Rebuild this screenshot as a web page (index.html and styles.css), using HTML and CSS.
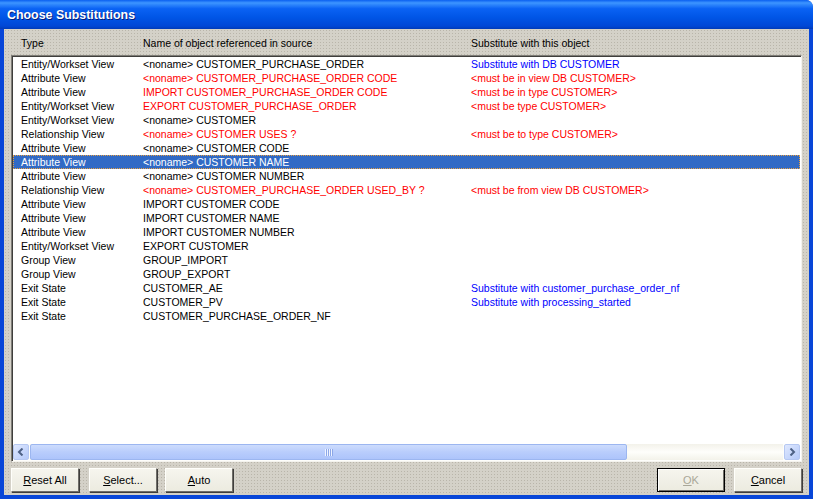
FILE: index.html
```html
<!DOCTYPE html>
<html lang="en">
<head>
    <meta charset="UTF-8">
    <title>Choose Substitutions</title>
    <link rel="stylesheet" href="styles.css">
</head>
<body>
    <div class="window">
        <div class="titlebar">Choose Substitutions</div>

        <div class="dialog">
            <div class="cols header">
                <span>Type</span>
                <span>Name of object referenced in source</span>
                <span>Substitute with this object</span>
            </div>

            <div class="listbox">
                <div class="rows">
                    <div class="cols row"><span>Entity/Workset View</span><span>&lt;noname&gt; CUSTOMER_PURCHASE_ORDER</span><span class="blue">Substitute with DB CUSTOMER</span></div>
                    <div class="cols row"><span>Attribute View</span><span class="red">&lt;noname&gt; CUSTOMER_PURCHASE_ORDER CODE</span><span class="red">&lt;must be in view DB CUSTOMER&gt;</span></div>
                    <div class="cols row"><span>Attribute View</span><span class="red">IMPORT CUSTOMER_PURCHASE_ORDER CODE</span><span class="red">&lt;must be in type CUSTOMER&gt;</span></div>
                    <div class="cols row"><span>Entity/Workset View</span><span class="red">EXPORT CUSTOMER_PURCHASE_ORDER</span><span class="red">&lt;must be type CUSTOMER&gt;</span></div>
                    <div class="cols row"><span>Entity/Workset View</span><span>&lt;noname&gt; CUSTOMER</span><span></span></div>
                    <div class="cols row"><span>Relationship View</span><span class="red">&lt;noname&gt; CUSTOMER USES ?</span><span class="red">&lt;must be to type CUSTOMER&gt;</span></div>
                    <div class="cols row"><span>Attribute View</span><span>&lt;noname&gt; CUSTOMER CODE</span><span></span></div>
                    <div class="cols row selected"><span>Attribute View</span><span>&lt;noname&gt; CUSTOMER NAME</span><span></span></div>
                    <div class="cols row"><span>Attribute View</span><span>&lt;noname&gt; CUSTOMER NUMBER</span><span></span></div>
                    <div class="cols row"><span>Relationship View</span><span class="red">&lt;noname&gt; CUSTOMER_PURCHASE_ORDER USED_BY ?</span><span class="red">&lt;must be from view DB CUSTOMER&gt;</span></div>
                    <div class="cols row"><span>Attribute View</span><span>IMPORT CUSTOMER CODE</span><span></span></div>
                    <div class="cols row"><span>Attribute View</span><span>IMPORT CUSTOMER NAME</span><span></span></div>
                    <div class="cols row"><span>Attribute View</span><span>IMPORT CUSTOMER NUMBER</span><span></span></div>
                    <div class="cols row"><span>Entity/Workset View</span><span>EXPORT CUSTOMER</span><span></span></div>
                    <div class="cols row"><span>Group View</span><span>GROUP_IMPORT</span><span></span></div>
                    <div class="cols row"><span>Group View</span><span>GROUP_EXPORT</span><span></span></div>
                    <div class="cols row"><span>Exit State</span><span>CUSTOMER_AE</span><span class="blue">Substitute with customer_purchase_order_nf</span></div>
                    <div class="cols row"><span>Exit State</span><span>CUSTOMER_PV</span><span class="blue">Substitute with processing_started</span></div>
                    <div class="cols row"><span>Exit State</span><span>CUSTOMER_PURCHASE_ORDER_NF</span><span></span></div>
                </div>

                <div class="hscroll">
                    <div class="arrow">
                        <svg width="8" height="8" viewBox="0 0 8 8"><path d="M5.5 0.5 L2 4 L5.5 7.5" fill="none" stroke="#4d6185" stroke-width="2"/></svg>
                    </div>
                    <div class="track">
                        <div class="thumb"><span class="grip"></span></div>
                    </div>
                    <div class="arrow">
                        <svg width="8" height="8" viewBox="0 0 8 8"><path d="M2.5 0.5 L6 4 L2.5 7.5" fill="none" stroke="#4d6185" stroke-width="2"/></svg>
                    </div>
                </div>
            </div>

            <div class="buttons">
                <button class="btn"><u>R</u>eset All</button>
                <button class="btn"><u>S</u>elect...</button>
                <button class="btn"><u>A</u>uto</button>
                <span class="spacer"></span>
                <button class="btn default" disabled><u>O</u>K</button>
                <button class="btn"><u>C</u>ancel</button>
            </div>
        </div>
    </div>
</body>
</html>
```

FILE: styles.css
```css
* {
    margin: 0;
    padding: 0;
    box-sizing: border-box;
}

body {
    font-family: Tahoma, 'Liberation Sans', 'DejaVu Sans', sans-serif;
    font-size: 10.5px;
    color: #000;
    background: #fff;
    overflow: hidden;
}

/* Window frame */
.window {
    width: 813px;
    height: 499px;
    display: flex;
    flex-direction: column;
    background: #0846d8;
    border-top-right-radius: 7px;
    overflow: hidden;
}

.titlebar {
    height: 29px;
    flex: none;
    padding: 8px 0 0 7px;
    font-size: 12.4px;
    font-weight: bold;
    color: #fff;
    text-shadow: 1px 1px 0 #0a1e7a;
    background: linear-gradient(#0a5ff0 0%, #3d95ff 10%, #0a62f4 30%, #0055e6 60%, #0047d6 90%, #003ab8 100%);
}

.dialog {
    flex: 1;
    display: flex;
    flex-direction: column;
    margin: 0 4px 4px 4px;
    padding: 0 7px 0 7px;
    background-color: #d4d1c8;
    background-image: radial-gradient(circle, #b9b5aa 0.6px, transparent 0.9px);
    background-size: 3px 3px;
}

.cols {
    display: grid;
    grid-template-columns: 122px 328px 1fr;
    white-space: nowrap;
}

.header {
    height: 26px;
    padding: 7px 0 0 10px;
    line-height: 14px;
}

/* List box */
.listbox {
    height: 407px;
    display: flex;
    flex-direction: column;
    background: #fff;
    border: 1px solid;
    border-color: #7f7d78 #f4f3ee #f4f3ee #7f7d78;
    box-shadow: inset 1px 1px 0 #3f3e3c;
    padding: 1px 1px 0 1px;
}

.rows {
    flex: 1;
}

.row {
    height: 14px;
    line-height: 14px;
    padding-left: 8px;
}

.row.selected {
    background: #316ac5;
    color: #fff;
    outline: 1px dotted #e8a040;
    outline-offset: -1px;
}

.red {
    color: #ff0000;
}

.blue {
    color: #0000ff;
}

/* Horizontal scrollbar */
.hscroll {
    height: 17px;
    display: flex;
    gap: 1px;
    padding-bottom: 1px;
    background: #fefefb;
}

.arrow {
    width: 16px;
    height: 16px;
    display: flex;
    align-items: center;
    justify-content: center;
    border: 1px solid #b6c8f2;
    border-radius: 2px;
    background: linear-gradient(135deg, #dfe8fe, #b5cafa);
}

.track {
    flex: 1;
    display: flex;
    background: linear-gradient(#f3f2ea, #fefefb 50%, #f3f2ea);
}

.thumb {
    width: 597px;
    height: 16px;
    display: flex;
    align-items: center;
    justify-content: center;
    border: 1px solid #9cb6f0;
    border-radius: 2px;
    background: linear-gradient(#cddcfd, #b9cdfc 50%, #adc4fb);
}

.grip {
    width: 8px;
    height: 7px;
    background: repeating-linear-gradient(90deg, #eef3ff 0 1px, #8ca7e8 1px 2px);
}

/* Buttons */
.buttons {
    flex: 1;
    display: flex;
    align-items: flex-start;
    padding-top: 6px;
    gap: 10px;
}

.spacer {
    flex: 1;
}

.btn {
    width: 68px;
    height: 24px;
    font-family: inherit;
    font-size: 11px;
    color: #000;
    border: 1px solid;
    border-color: #fffffb #6f6d68 #6f6d68 #fffffb;
    box-shadow: 1px 1px 0 #3f3e3c;
    background: linear-gradient(#f6f5ee, #ecebe0);
}

.btn:nth-child(3) {
    margin-left: -2px;
}

.btn.default {
    color: #a9a798;
    border: 1px solid #000;
    box-shadow: inset 1px 1px 0 #fff, inset -1px -1px 0 #6f6d68;
    margin-right: -1px;
}

.btn u {
    text-underline-offset: 1px;
}
```
